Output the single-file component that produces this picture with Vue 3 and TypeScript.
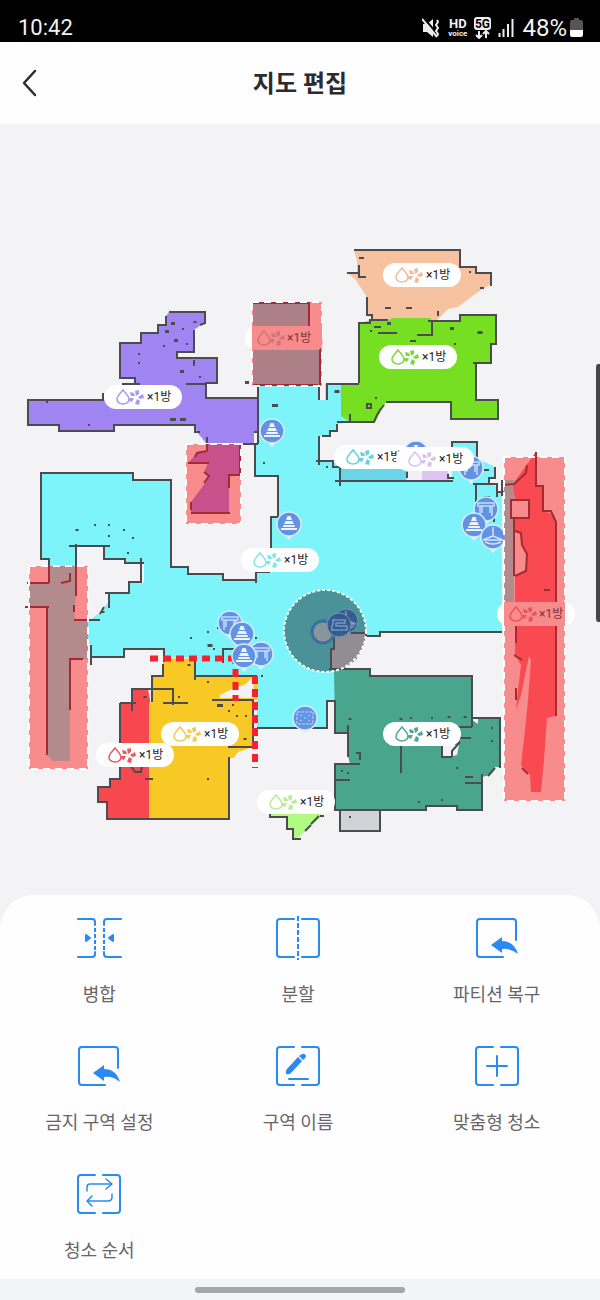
<script setup lang="ts">
interface Pill { x: number; y: number; color: string; inZone?: boolean }
interface Pin { x: number; y: number; kind: 'cone' | 'table' | 'fan' | 'rug' | 'sofa' }
interface Room { fill: string; points: string }
interface Zone { x: number; y: number; w: number; h: number }
interface Action { id: string; label: string }

const rooms: Room[] = [
  { fill: '#7df4f9', points: '258,386 319,386 319,400 325,400 325,384 343,384 343,416 350,422 337,424 337,431 330,431 330,436 319,436 319,461 333,461 340,468 340,482 452,482 452,442 477,442 477,460 485,462 495,467 495,478 489,478 489,484 497,486 497,493 502,493 502,632 380,632 380,636 330,636 330,667 335,670 335,701 327,701 327,728 257,728 257,676 196,676 196,658 164,657 164,649 124,649 124,657 91,657 91,645 88,643 88,622 100,614 105,600 109,592 128,592 128,592 144,582 144,563 125,563 125,559 104,559 104,546 76,546 76,566 49,566 49,559 41,559 41,473 133,473 133,480 171,480 171,567 188,567 188,574 223,574 223,580 256,580 256,572 270,572 270,517 278,517 278,476 255,476 255,444 258,440' },
  { fill: '#f3f2f4', points: '129,592 129,582 141,582 141,563 125,563 125,559 104,559 104,546 76,546 76,620 90,620 99,612 109,602 109,592' },
  { fill: '#7df4f9', points: '109,593 129,593 129,583 145,583 145,620 88,622 99,613 109,603' },
  { fill: '#6bd5e8', points: '341,466 408,466 408,474 406,481 341,481' },
  { fill: '#f0eff3', points: '409,466 421,466 421,481 407,481 409,474' },
  { fill: '#dfc3f2', points: '422,466 447,466 450,481 422,481' },
  { fill: '#a084f2', points: '169,312 205,312 205,322 194,330 194,352 177,352 177,358 217,358 217,383 206,383 206,398 258,398 258,432 254,432 254,443 206,443 197,432 195,425 114,425 114,431 59,431 59,425 28,425 28,400 103,400 130,384 136,384 134,378 120,378 120,343 141,343 141,333 158,333 158,325 166,325 166,316' },
  { fill: '#f6c2a0', points: '354,250 460,250 460,267 476,267 476,273 491,273 491,284 478,292 458,307 448,309 435,322 372,322 372,317 367,316 367,297 355,279 348,273 357,272 357,260' },
  { fill: '#77df22', points: '359,323 372,320 388,321 392,318 430,318 432,321 460,320 460,315 496,315 496,344 491,344 491,363 476,363 476,400 498,400 498,419 451,419 451,402 386,402 375,422 350,422 341,416 341,385 345,383 359,383' },
  { fill: '#f8484f', points: '132,689 148,689 150,700 150,819 107,819 107,802 98,802 98,787 110,787 110,779 120,779 120,703 132,703' },
  { fill: '#f8c925', points: '149,703 152,702 152,676 163,676 163,658 195,659 195,676 257,676 257,699 253,700 253,747 238,752 234,758 229,758 229,819 149,819' },
  { fill: '#f3f2f4', points: '253,677 246,684 232,689 220,695 220,698 254,698' },
  { fill: '#4aa58f', points: '334,668 370,668 370,676 472,676 472,720 478,724 478,718 500,718 500,767 495,767 490,775 482,777 482,810 457,810 457,806 426,806 426,810 335,810 335,764 350,764 348,756 348,733 335,733' },
  { fill: '#f3f2f4', points: '442,745 459,745 457,755 450,757 443,757' },
  { fill: '#d2d3d8', points: '340,811 380,811 380,831 340,831' },
  { fill: '#b1fa83', points: '268,808 322,808 320,818 305,831 298,838 293,838 293,829 288,828 286,818 272,817' },
]

const walls: string[] = [
  'M169,312H205V323L200,325 M194,330V352H177V358H217V383H206V398H258 M194,360v6 M166,316V325H158V333H141V343H120V378H135V384 M122,384H140 M186,384H207 M103,393V400H28V425H59V431H114V425H195V432H200 M258,388V444 M243,444H258 M254,432h5 M207,437v6',
  'M354,250H460V267H476V273H491V286 M347,273H359 M359,265V277H366 M367,297V315H372V320H381 M484,288h-4 M385,308h6 M406,308h6 M438,311v5 M359,258h5',
  'M359,383V323H370V320H388 M428,321H460V315H496V344H491V363H476 M473,363H476V400H498V419H451V402H386 M384,405l-4,5-3,5-3,7H337 M378,333h19 M417,335h15V320 M374,327h7 M350,422v-8 M410,341h6 M327,400V384H359 M319,348V400 M337,424V431H330V436H322 M319,436V465 M316,461H333V467H340V486 M335,481H453 M407,472v6 M448,474v4h6 M452,458V442H477V460 M484,470h5 M495,467V478H489V484H497V497 M473,484H497 M476,484v18 M484,497h6 M502,480V496 M497,492h8 M494,510v12',
  'M258,386V398 M255,444V476H278V517H271V572 M256,583V572H270 M256,580H223V574H188V567H171V480H133V473H41V559H49V583 M76,544V596 M69,546H110 M104,546V559H125V563H144 M141,558V582H129V593H105 M109,593v15 M104,607l-4,7 M74,620H100 M91,645v20 M91,657H124V649H164V662 M502,632H380V636H366 M331,669H370V676H472V727 M257,728H327V701H335V733H348V757 M223,663V649H240V665',
  'M195,659V680 M195,676H257 M163,664V676H152V702 M131,689H173V705 M163,703H188 M120,703H136 M120,703V768 M132,689V711 M120,766V779H110V787H98V802H107V819H229V757 M228,747H253V700H212 M145,779h8 M131,766l4,6h6l1,-6',
  'M472,718H478V718H500V768 M495,768l-7,8 M482,774V810H457V806H426V810H335V764H360 M335,780H350 M348,757V725 M458,727H472 M459,738h12 M460,742l-8,9v6 M442,745V757H452 M401,745V773 M465,777h8 M465,783h18 M356,753h4v7 M340,811V831H380V811 M270,813V817H287V829H293V839H301 M305,831l6,-6 M311,824l8,-8 M320,816h4',
]

// x, y, width
const specks: number[][] = [
  [173, 323, 4], [167, 331, 4], [183, 329, 2], [176, 340, 4], [187, 344, 2], [164, 346, 2], [139, 354, 2], [139, 363, 2], [182, 371, 4], [200, 377, 2], [195, 322, 3],
  [173, 419, 6], [183, 419, 6], [47, 402, 2], [89, 425, 2], [247, 382, 4], [275, 405, 6], [337, 391, 5], [389, 323, 4], [452, 328, 4], [480, 332, 5], [470, 272, 2], [376, 398, 2], [371, 331, 2], [455, 344, 2],
  [77, 530, 3], [95, 525, 2], [109, 525, 2], [124, 530, 2], [109, 536, 2], [133, 538, 2], [128, 553, 2], [103, 612, 3], [191, 638, 2], [208, 632, 2], [218, 628, 2], [214, 649, 2], [256, 638, 2], [262, 676, 2],
  [210, 645, 5], [189, 665, 3], [208, 682, 2], [179, 697, 2], [145, 697, 3], [220, 705, 6], [229, 711, 2], [237, 716, 2], [246, 716, 2], [245, 739, 3], [208, 779, 2], [233, 705, 2],
  [350, 719, 3], [401, 719, 3], [411, 718, 2], [432, 718, 2], [449, 717, 3], [465, 717, 3], [492, 728, 2], [492, 741, 2], [342, 771, 2], [348, 773, 2], [442, 800, 2], [419, 802, 2], [350, 817, 2], [457, 768, 2], [264, 463, 2], [327, 467, 2],
]

const pills: Pill[] = [
  { x: 383, y: 263, color: '#f3bb93' },
  { x: 379, y: 345, color: '#7cd83a' },
  { x: 104, y: 385, color: '#a99af0' },
  { x: 334, y: 445, color: '#67cfe2' },
  { x: 396, y: 447, color: '#dcc0ec' },
  { x: 241, y: 548, color: '#7fe6ec' },
  { x: 383, y: 722, color: '#4ea99a' },
  { x: 161, y: 722, color: '#f2ca4d' },
  { x: 96, y: 743, color: '#ea5860' },
  { x: 257, y: 790, color: '#b5ee92' },
  { x: 245, y: 326, color: '#cf7479', inZone: true },
  { x: 497, y: 602, color: '#ea555c', inZone: true },
]
const zonePills = pills.filter((p) => p.inZone)

const zones: Zone[] = [
  { x: 252, y: 302, w: 70, h: 84 },
  { x: 186, y: 444, w: 55, h: 80 },
  { x: 29, y: 566, w: 59, h: 203 },
  { x: 504, y: 457, w: 61, h: 344 },
]

const pins: Pin[] = [
  { x: 272, y: 431, kind: 'cone' },
  { x: 289, y: 524, kind: 'cone' },
  { x: 416, y: 453, kind: 'cone' },
  { x: 471, y: 468, kind: 'table' },
  { x: 486, y: 509, kind: 'table' },
  { x: 474, y: 525, kind: 'cone' },
  { x: 493, y: 537, kind: 'fan' },
  { x: 230, y: 623, kind: 'table' },
  { x: 261, y: 654, kind: 'table' },
  { x: 242, y: 634, kind: 'cone' },
  { x: 244, y: 656, kind: 'cone' },
  { x: 305, y: 718, kind: 'rug' },
]

const actions: Action[] = [
  { id: 'merge', label: '병합' },
  { id: 'split', label: '분할' },
  { id: 'restore', label: '파티션 복구' },
  { id: 'forbid', label: '금지 구역 설정' },
  { id: 'rename', label: '구역 이름' },
  { id: 'custom', label: '맞춤형 청소' },
  { id: 'order', label: '청소 순서' },
]
</script>

<template>
  <div class="screen">
    <div class="status">
      <span class="clock">10:42</span>
      <div class="indicators">
        <svg class="ind" width="18" height="20" viewBox="0 0 18 20">
          <path d="M1 6h4l6-5v18l-6-5H1z" fill="#eee" />
          <path d="M2 0l14 17" stroke="#000" stroke-width="2" />
          <path d="M0 1l15 18" stroke="#eee" stroke-width="2" />
          <path d="M15 2l1 2-2 3 2 3-2 3 2 3-1 2" stroke="#eee" stroke-width="2" fill="none" />
        </svg>
        <span class="hd"><b>HD</b><i>voice</i></span>
        <svg class="ind" width="19" height="22" viewBox="0 0 19 22">
          <rect x="1" y="0" width="17" height="13" rx="3" fill="#eee" />
          <text x="9.5" y="11" text-anchor="middle" class="fiveg">5G</text>
          <path d="M6 14v7M3 18l3 3 3-3M13 21v-7M10 17l3-3 3 3" stroke="#eee" stroke-width="2" fill="none" />
        </svg>
        <svg class="ind" width="16" height="20" viewBox="0 0 16 20">
          <path d="M1.500 15v4M5.500 11v8M10 6v13M14.500 1v18" stroke="#eee" stroke-width="2" />
        </svg>
        <span class="percent">48%</span>
        <svg class="ind battery" width="13" height="20" viewBox="0 0 13 20">
          <path d="M4 0h5v2h2q2 0 2 2v8H0V4q0-2 2-2h2z" fill="#555" />
          <path d="M0 12h13v5q0 2-2 2H2q-2 0-2-2z" fill="#fff" />
        </svg>
      </div>
    </div>

    <header class="header">
      <button class="back" aria-label="뒤로">
        <svg width="16" height="28" viewBox="0 0 16 28">
          <path d="M13 2L2 14l11 12" fill="none" stroke="#2b2b2d" stroke-width="2.500" stroke-linecap="round" stroke-linejoin="round" />
        </svg>
      </button>
      <h1>지도 편집</h1>
    </header>

    <main class="map">
      <svg class="plan" viewBox="0 124 600 770" role="img" aria-label="지도">
        <defs>
          <g id="drop-fan">
            <path d="M19 5c3 4 6 6 6 9.500a6 4.500 0 0 1-12 0c0-3.500 3-5.500 6-9.500z" fill="none" stroke="currentColor" stroke-width="1.500" />
            <path d="M32 11l-1-5 4-1 0 4zM34 12l5-3 1 4-4 1zM33 14l3 2-1 4-4-1zM30 13l-2 4-4-2 2-2zM31 11l-4 0-1-4 4 1z" fill="currentColor" />
          </g>
          <g id="pin">
            <path d="M-5 10L0 16 5 10z" fill="#e6f0fb" />
            <circle r="12" fill="#6192e4" stroke="#d9ebfb" stroke-width="1.500" />
          </g>
          <g id="pin-cone" fill="#eef4ff">
            <path d="M-1.500-8h3L3-4h-6zM-3.500-3h7L5 0H-5zM-5.500 1h11L6 3H-6zM-8 4H8v2H-8z" />
          </g>
          <g id="pin-table" fill="none" stroke="#c6dbfa" stroke-width="1.500">
            <path d="M-8-6H8V-3H-8zM-6-3V7M6-3V7M-4-3V4M4-3V4" />
          </g>
          <g id="pin-fan" fill="none" stroke="#d6e5fb" stroke-width="1.500">
            <path d="M0-10V-1M0-1L-10 3H10zM-8 5Q0 9 8 5" />
          </g>
          <g id="pin-rug" fill="none" stroke="#c0d6f8" stroke-width="1">
            <rect x="-8" y="-6" width="16" height="12" stroke-dasharray="3 1" />
            <path d="M-5-3l2 1M5-3l-2 1M-5 3l2-1M5 3l-2-1M-1 0h2" />
          </g>
          <g id="pin-sofa" fill="none" stroke="#c6dbfa" stroke-width="1.500">
            <path d="M-6-1V-5H6V-2H-3V1H8V5H-7V1z" />
          </g>
        </defs>

        <polygon v-for="(room, i) in rooms" :key="'r' + i" :points="room.points" :fill="room.fill" />
        <path v-for="(wall, i) in walls" :key="'w' + i" :d="wall" class="wall" />
        <rect v-for="(s, i) in specks" :key="'s' + i" :x="s[0] - s[2] / 2" :y="s[1] - 1" :width="s[2]" :height="s[2] > 3 ? 3 : 2" fill="#4c4c50" />
        <rect x="367" y="404" width="4" height="4" class="wall" />

        <g class="nogo-lines">
          <path d="M150 658.500H235" />
          <path d="M235.500 656V701" />
          <path d="M255 676V768" />
        </g>

        <g v-for="(pin, i) in pins" :key="'p' + i" :transform="`translate(${pin.x} ${pin.y})`">
          <use href="#pin" />
          <use :href="'#pin-' + pin.kind" />
        </g>

        <g v-for="(p, i) in pills" :key="'l' + i" :transform="`translate(${p.x} ${p.y})`">
          <rect width="78" height="24" rx="12" fill="#fff" />
          <g v-if="!p.inZone">
            <use href="#drop-fan" :color="p.color" />
            <text x="43" y="16" class="pill-text">×1방</text>
          </g>
        </g>

        <rect v-for="(z, i) in zones" :key="'z' + i" :x="z.x" :y="z.y" :width="z.w" :height="z.h" fill="#f88c8d" />
        <path d="M253 303H309V326H253zM253 350H319V385H253z" fill="#ad7f86" />
        <path d="M208 444H240V475H229V513H191V502L206 482 209 476 204 472 208 463H188L197 453 207 451z" fill="#c9508a" />
        <path d="M29 583H49V566H76V596L74 610 75 620H88V659H70V761H53L47 755V607H29z" fill="#b48b8c" />
        <path d="M504 480H514V602H504z" fill="#b48b8c" />
        <path d="M535 453L537 486 544 487V511L552 514 556 524V716L547 718 544 760 541 792H531L530 775 521 765 525 730 528 700 531 660 529 656 521 695 516 710 518 690 521 665 515 655V500L513 484z" fill="#f84a50" />
        <path d="M511 500H529V518H511zM515 531L520 533 522 545 527 554 526 570 515 576z" fill="#f88c8d" />
        <g class="zone-wall">
          <path d="M253 303H309V326M320 348V385M318 385H253" />
          <path d="M207 444V451L197 453 195 457M188 463H209M204 472L209 476 204 483M240 444V475H229V488M191 513H230M191 502v8" />
          <path d="M49 566V583M27 583H49M25 607H49M47 607V755M76 566V596M70 573v8l-9 2M74 612v-7M74 620H87M70 710V659H83" />
          <path d="M536 452V486H543V511H551L556 522V716M503 485L514 484 526 473 527 465M511 500H529V518H511zM514 518V576M515 531l6 2 1 12 5 9-1 17-11 5M516 625v18M514 655l8 5M516 688v12M544 590h6M522 768l6 6" />
        </g>
        <rect v-for="(z, i) in zones" :key="'b' + i" :x="z.x" :y="z.y" :width="z.w" :height="z.h" class="zone-border" />
        <path d="M252 326H322V338a12 12 0 0 1-3 12H252z" fill="#f88c8d" />
        <path d="M504 602H565V626H504z" fill="#f88c8d" />
        <g v-for="(p, i) in zonePills" :key="'zp' + i" :transform="`translate(${p.x} ${p.y})`">
          <use href="#drop-fan" :color="p.color" />
          <text x="42" y="16" class="pill-text muted">×1방</text>
        </g>

        <g>
          <circle cx="325" cy="631" r="41" fill="#4a9297" />
          <path d="M334 636L350 633H366L363 647 356 660 345 668H331V649H334z" fill="#928d93" />
          <path d="M331 668V649H334V636M329 669H346M351 633H366V637" class="wall" />
          <circle cx="323" cy="632" r="11" fill="#88959b" stroke="#3b6fa0" stroke-width="3" />
          <g class="shaded-pin" transform="translate(346 621)">
            <circle r="12" />
            <use href="#pin-fan" />
          </g>
          <g class="shaded-pin" transform="translate(339 625)">
            <circle r="12" />
            <use href="#pin-sofa" />
          </g>
          <circle cx="325" cy="631" r="41" class="robot" />
        </g>

        <path d="M600 364h-2q-2 0-2 4V618q0 4 2 4h2z" fill="#46464a" />
      </svg>
    </main>

    <nav class="panel">
      <button v-for="a in actions" :key="a.id" class="action">
        <svg width="48" height="48" viewBox="0 0 48 48" class="icon">
          <g v-if="a.id === 'merge'">
            <path d="M3 5H17Q20 5 20 8V11M3 43H17Q20 43 20 40V38M46 5H32Q29 5 29 8V11M46 43H32Q29 43 29 40V38" />
            <path d="M20 14V37M29 14V37" stroke-dasharray="4 2" stroke-linecap="butt" />
            <path d="M11 21L15 24 11 27zM38 21L34 24 38 27z" fill="#2a8af3" />
          </g>
          <g v-else-if="a.id === 'split'">
            <path d="M20 5H6Q3 5 3 8V40Q3 43 6 43H20M28 5H42Q45 5 45 8V40Q45 43 42 43H28" />
            <path d="M24 2V46" stroke-dasharray="5 2" stroke-linecap="butt" />
          </g>
          <g v-else-if="a.id === 'restore' || a.id === 'forbid'">
            <path d="M43 26V8Q43 5 40 5H7Q4 5 4 8V40Q4 43 7 43H30" />
            <path d="M18 31L29 23V27Q41 27 45 40Q38 34 29 35V39z" fill="#2a8af3" stroke="none" />
          </g>
          <g v-else>
            <path d="M20 5H6Q3 5 3 8V40Q3 43 6 43H20M28 5H42Q45 5 45 8V40Q45 43 42 43H28" />
            <g v-if="a.id === 'rename'">
              <path d="M24 15L28 19 17 31Q15 33 12 32Q11 29 13 27z" fill="#2a8af3" stroke="none" />
              <path d="M25 14L28 12Q31 11 32 14Q32 16 29 18z" fill="#2a8af3" stroke="none" />
              <path d="M15 37H34" />
            </g>
            <path v-else-if="a.id === 'custom'" d="M24 14V34M14 24H34" />
            <path v-else d="M12 21V17Q12 14 15 14H37M31 9L37 14 31 19M37 24V27Q37 31 33 31H12M17 26L12 31 17 36" stroke-width="1.500" />
          </g>
        </svg>
        <span>{{ a.label }}</span>
      </button>
    </nav>
    <footer class="gesture"><div class="handle"></div></footer>
  </div>
</template>

<style>
body { margin: 0; background: #f3f4f6; }
</style>

<style scoped>
.screen {
  display: flex;
  flex-direction: column;
  min-height: 100vh;
  background: #f3f2f4;
  font-family: Roboto, "Noto Sans CJK KR", sans-serif;
}
.status {
  display: flex;
  justify-content: space-between;
  align-items: center;
  height: 42px;
  padding: 14px 17px 0 18px;
  box-sizing: border-box;
  background: #000;
  color: #f2f2f2;
}
.clock { font-size: 22px; line-height: 28px; }
.percent { font-size: 24px; line-height: 28px; margin-left: 8px; }
.indicators { display: flex; align-items: center; }
.ind { display: block; }
.battery { margin-left: 3px; }
.hd { display: flex; flex-direction: column; align-items: center; margin: 0 6px 0 8px; }
.hd b { font-size: 13px; line-height: 12px; font-weight: 700; }
.hd i { font-size: 8px; line-height: 8px; font-style: normal; font-weight: 700; }
.hd + .ind { margin-right: 6px; }
.fiveg { font: 700 12px Roboto, sans-serif; fill: #000; }
.header {
  display: grid;
  grid-template-columns: 60px 1fr 60px;
  align-items: center;
  height: 82px;
  background: #fefdff;
}
.back { display: flex; justify-content: center; padding: 0; border: 0; background: none; cursor: pointer; }
h1 {
  margin: 0;
  padding-top: 2px;
  text-align: center;
  font-size: 24px;
  line-height: 32px;
  font-weight: 700;
  color: #2b2b2d;
}
.map { flex: 1 0 auto; background: #f3f2f4; }
.plan { display: block; width: 100%; }
.wall { fill: none; stroke: #4c4c50; stroke-width: 2; }
.zone-wall path { fill: none; stroke: #a32c34; stroke-width: 2; }
.zone-border { fill: none; stroke: #fff; stroke-width: 2; stroke-dasharray: 7 5; }
.nogo-lines path { fill: none; stroke: #f5222d; stroke-width: 6; stroke-dasharray: 8 5; }
.shaded-pin { opacity: 0.9; }
.shaded-pin circle { fill: #31598f; stroke: #7b98b5; stroke-width: 1; }
.shaded-pin use { opacity: 0.5; }
.robot { fill: none; stroke: #fff; stroke-width: 2; stroke-dasharray: 3 2; }
.pill-text { font: 400 12px Roboto, "Noto Sans CJK KR", sans-serif; fill: #222; }
.pill-text.muted { fill: #7c3038; }
.panel {
  display: grid;
  grid-template-columns: repeat(3, 1fr);
  row-gap: 32px;
  padding: 19px 4px 13px 0;
  border-radius: 34px 34px 0 0;
  background: #fefdff;
}
.action {
  display: flex;
  flex-direction: column;
  align-items: center;
  gap: 18px;
  padding: 0;
  border: 0;
  background: none;
  color: #666;
  font-family: inherit;
  font-size: 18px;
  line-height: 30px;
  cursor: pointer;
}
.icon { display: block; fill: none; stroke: #2a8af3; stroke-width: 2; stroke-linecap: round; stroke-linejoin: round; }
.gesture { display: flex; justify-content: center; padding: 8px 0 7px; background: #f3f4f6; }
.handle { width: 35%; height: 6px; border-radius: 3px; background: #a6a6a9; }
</style>
